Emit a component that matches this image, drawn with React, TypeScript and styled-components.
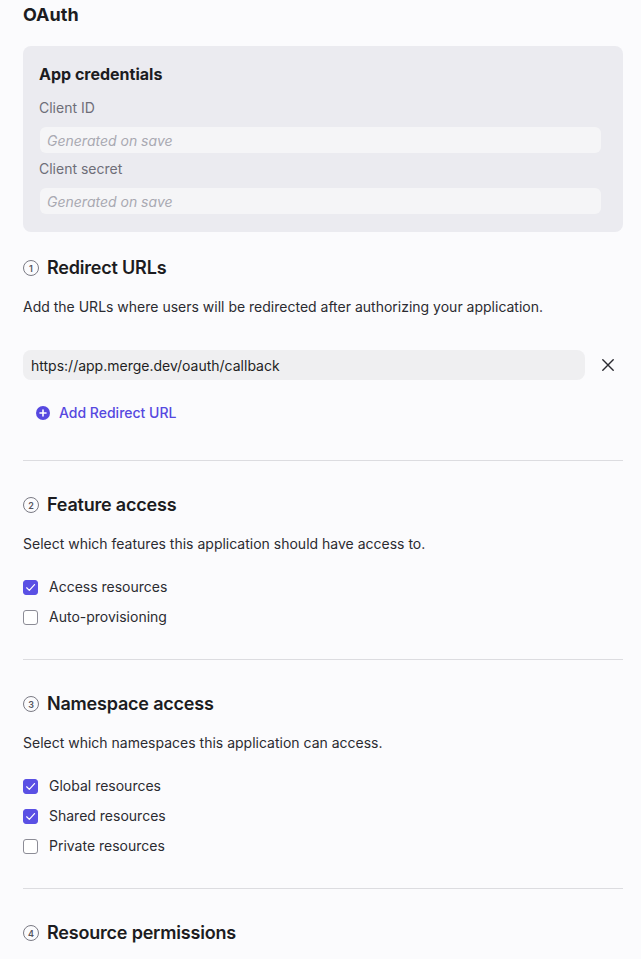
import React from "react";
import styled, { createGlobalStyle } from "styled-components";

const GlobalStyle = createGlobalStyle`
  body {
    margin: 0;
    background: #fbfbfd;
    font-family: Inter, "Noto Sans", sans-serif;
    color: #1c1c21;
  }
`;

const Page = styled.div`
  padding: 3px 18px 0 23px;
`;

const PageTitle = styled.h1`
  margin: 0;
  font-size: 18px;
  line-height: 24px;
  font-weight: 700;
`;

const Panel = styled.div`
  margin-top: 19px;
  background: #ebebf0;
  border-radius: 8px;
  padding: 16px 22px 18px 16px;
  display: flex;
  flex-direction: column;
`;

const PanelTitle = styled.h2`
  margin: 0 0 12px;
  font-size: 16px;
  line-height: 24px;
  font-weight: 700;
`;

const FieldLabel = styled.label`
  font-size: 14px;
  line-height: 20px;
  color: #6e6e78;
  margin-bottom: 9px;
`;

const ReadonlyInput = styled.div<{ $last?: boolean }>`
  height: 26px;
  margin-left: 1px;
  margin-bottom: ${(p) => (p.$last ? 0 : 6)}px;
  background: #f5f5f7;
  border-radius: 6px;
  padding: 0 7px;
  display: flex;
  align-items: center;
  font-size: 14px;
  font-style: italic;
  color: #a9a9b2;
`;

const Section = styled.section<{ $divider?: boolean }>`
  padding: ${(p) => (p.$divider ? 32 : 24)}px 0 32px;
  border-top: ${(p) => (p.$divider ? "1px solid #dcdce0" : "none")};
`;

const SectionHeader = styled.div`
  display: flex;
  align-items: center;
  gap: 8px;
`;

const StepBadge = styled.span`
  width: 14px;
  height: 14px;
  border: 1px solid #7a7a84;
  border-radius: 50%;
  display: inline-flex;
  align-items: center;
  justify-content: center;
  font-size: 9px;
  font-weight: 600;
  color: #55555e;
  flex-shrink: 0;
`;

const SectionTitle = styled.h3`
  margin: 0;
  font-size: 18px;
  line-height: 24px;
  font-weight: 600;
  letter-spacing: -0.2px;
`;

const Description = styled.p`
  margin: 17px 0 0;
  font-size: 14px;
  line-height: 20px;
  color: #2b2b31;
`;

const UrlRow = styled.div`
  margin-top: 33px;
  display: flex;
  align-items: center;
  gap: 17px;
`;

const UrlField = styled.div`
  flex: 1;
  height: 30px;
  background: #efeff1;
  border-radius: 8px;
  padding: 0 8px;
  display: flex;
  align-items: center;
  font-size: 14px;
  color: #1f1f24;
`;

const IconButton = styled.button`
  border: none;
  background: none;
  padding: 0;
  width: 12px;
  margin-right: 9px;
  display: flex;
  align-items: center;
  justify-content: center;
  color: #2a2a30;
  cursor: pointer;
`;

const AddLink = styled.button`
  margin: 23px 0 5px 13px;
  border: none;
  background: none;
  padding: 0;
  display: flex;
  align-items: center;
  gap: 9px;
  font-family: inherit;
  font-size: 14px;
  line-height: 20px;
  font-weight: 500;
  color: #5648e0;
  cursor: pointer;
`;

const CheckList = styled.div`
  margin-top: 23px;
  display: flex;
  flex-direction: column;
  gap: 10px;
`;

const CheckRow = styled.label`
  display: flex;
  align-items: center;
  gap: 11px;
  font-size: 14px;
  line-height: 20px;
  color: #2b2b31;
`;

const Box = styled.span<{ $checked: boolean }>`
  width: 15px;
  height: 15px;
  box-sizing: border-box;
  border-radius: 3px;
  border: 1px solid ${(p) => (p.$checked ? "#5a50e4" : "#8c8c96")};
  background: ${(p) => (p.$checked ? "#5a50e4" : "#fff")};
  display: flex;
  align-items: center;
  justify-content: center;
`;

function Checkbox({ label, checked }: { label: string; checked: boolean }) {
  return (
    <CheckRow>
      <Box $checked={checked}>
        {checked && (
          <svg width="11" height="11" viewBox="0 0 12 12" fill="none">
            <path d="M1.8 6.3 4.7 9.2 10.4 2.8" stroke="#fff" strokeWidth="1.3" strokeLinecap="round" strokeLinejoin="round" />
          </svg>
        )}
      </Box>
      {label}
    </CheckRow>
  );
}

function Header({ step, title }: { step: number; title: string }) {
  return (
    <SectionHeader>
      <StepBadge>{step}</StepBadge>
      <SectionTitle>{title}</SectionTitle>
    </SectionHeader>
  );
}

export default function App() {
  return (
    <>
      <GlobalStyle />
      <Page>
        <PageTitle>OAuth</PageTitle>
        <Panel>
          <PanelTitle>App credentials</PanelTitle>
          <FieldLabel>Client ID</FieldLabel>
          <ReadonlyInput>Generated on save</ReadonlyInput>
          <FieldLabel>Client secret</FieldLabel>
          <ReadonlyInput $last>Generated on save</ReadonlyInput>
        </Panel>

        <Section>
          <Header step={1} title="Redirect URLs" />
          <Description>Add the URLs where users will be redirected after authorizing your application.</Description>
          <UrlRow>
            <UrlField>https://app.merge.dev/oauth/callback</UrlField>
            <IconButton aria-label="Remove">
              <svg width="12" height="12" viewBox="0 0 12 12" fill="none">
                <path d="M0.8 0.8l10.4 10.4M11.2 0.8 0.8 11.2" stroke="currentColor" strokeWidth="1.4" strokeLinecap="round" />
              </svg>
            </IconButton>
          </UrlRow>
          <AddLink>
            <svg width="14" height="14" viewBox="0 0 14 14">
              <circle cx="7" cy="7" r="7" fill="#5648e0" />
              <path d="M7 4v6M4 7h6" stroke="#fff" strokeWidth="1.6" strokeLinecap="round" />
            </svg>
            Add Redirect URL
          </AddLink>
        </Section>

        <Section $divider>
          <Header step={2} title="Feature access" />
          <Description>Select which features this application should have access to.</Description>
          <CheckList>
            <Checkbox label="Access resources" checked />
            <Checkbox label="Auto-provisioning" checked={false} />
          </CheckList>
        </Section>

        <Section $divider>
          <Header step={3} title="Namespace access" />
          <Description>Select which namespaces this application can access.</Description>
          <CheckList>
            <Checkbox label="Global resources" checked />
            <Checkbox label="Shared resources" checked />
            <Checkbox label="Private resources" checked={false} />
          </CheckList>
        </Section>

        <Section $divider>
          <Header step={4} title="Resource permissions" />
        </Section>
      </Page>
    </>
  );
}
